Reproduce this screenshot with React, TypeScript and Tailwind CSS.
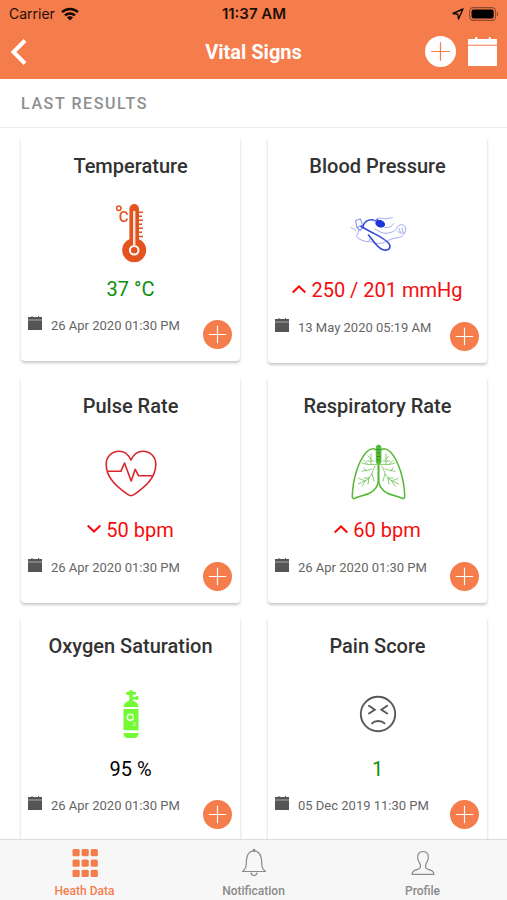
import type { ReactNode } from "react";

type Trend = "up" | "down";

type Vital = {
  title: string;
  value: string;
  color: string;
  trend?: Trend;
  date: string;
  icon: ReactNode;
};

function ThermometerIcon() {
  return (
    <svg viewBox="0 0 60 60" className="size-15" aria-hidden="true">
      <g fill="#e2531f">
        <rect x="28.4" y="1" width="9.6" height="42" rx="4.8" />
        <circle cx="33.2" cy="47.2" r="12" />
      </g>
      <path d="M33.2 8v34" stroke="#fbe3da" strokeWidth="2.4" />
      <circle cx="33.2" cy="47.3" r="4.3" fill="none" stroke="#fff" strokeWidth="2" />
      <path
        d="M37 9.3h5M37 13.3h4M37 17.3h5M37 21.3h4M37 25.3h5M37 29.3h4M37 33.5h5"
        stroke="#e2531f"
        strokeWidth="1.4"
      />
      <circle cx="17.8" cy="5.3" r="2.2" fill="none" stroke="#e2531f" strokeWidth="1.5" />
      <text x="17.8" y="18.8" fontSize="15" fontFamily="Roboto, sans-serif" fontWeight="500" fill="#e2531f">
        C
      </text>
    </svg>
  );
}

function BloodPressureIcon() {
  return (
    <svg viewBox="0 0 60 60" className="size-15" fill="none" strokeLinecap="round" aria-hidden="true">
      <g stroke="#a3aaf2" strokeWidth="1">
        <path d="M3 24.5c2 .8 3.600 2 5 3.200" />
        <path d="M11 27l-2.500 6.500c3 3.500 7.500 5 12 5.200l2-4" />
        <path d="M21.500 38c5 2.500 9 3 13 2s8-4.500 13-5c4-.4 7-1.500 8.500-4s2.500-5.500 1-7.500-4.500-2.300-6.500-.8-1.500 3.500-4 5-6 2.800-9.500 2.600-6.500-2.300-10-4.300" />
        <path d="M51 25.500l1.500 4M54 25l1 4M49.500 28c1.500 2 4 3 6.500 1.500" />
        <path d="M29 15.500c4-1.500 7 1 10 .2s4-.9 5.500-1M37 24.500c3-.3 4 .3 6-1.200s2-2.300 3-3" />
      </g>
      <g stroke="#8d97ee" strokeWidth="1.100">
        <path d="M7.500 17.500l5-1.500 2 6-5.500 2.500z" />
        <path d="M9 24.500l3 3 3.500-3.500" />
      </g>
      <path
        d="M15 23.500c1-4.500 5-7.500 10.500-6.500M13 23.500c5 2.800 8.500 4.700 12.500 6.700C32 33.500 42 38.500 42 43.300c0 4.200-5.500 5-9.500 2.200C27.500 42 24.500 36.500 20.500 32"
        stroke="#3349d8"
        strokeWidth="1.600"
      />
      <ellipse cx="32.200" cy="20.700" rx="5" ry="3.700" transform="rotate(20 32.200 20.700)" fill="#1d35d8" />
      <path d="M26.500 18l3-1.500" stroke="#3a4fd6" strokeWidth="1.200" />
    </svg>
  );
}

function HeartIcon() {
  return (
    <svg
      viewBox="0 0 60 60"
      className="size-15"
      fill="none"
      stroke="#d8262b"
      strokeWidth="1.6"
      strokeLinejoin="round"
      aria-hidden="true"
    >
      <path d="M30 17C27.500 11.500 23.500 8.200 18 8.200C10.500 8.200 5.200 14 5.200 21.500C5.200 35 16 44 27 51.600Q30 53.600 33 51.600C44 44 54.800 35 54.800 21.500C54.800 14 49.500 8.200 42 8.200C36.500 8.200 32.500 11.500 30 17Z" />
      <path d="M7 28.300H19.800L23.500 20L30.200 38L34.200 26.300L37.500 32.700H52" />
    </svg>
  );
}

function LungHalf() {
  return (
    <>
      <path
        d="M29 7.500C26 4.800 22 5.500 18.500 9C10 18 4.500 38 4.300 53.500Q4.300 56.300 7 55.300C12 53 17 52.500 22 50C27.500 47 30 43 30.200 38V21"
        strokeWidth="1.500"
      />
      <path
        d="M29 21.500C25 21 20 22.500 14 20M23 21V11M23 16l-3-3M20 21.500l-4-4M19 18h7M27 23c-2.500 5-3 9-6 12s-7 4-10.500 6M24 26c-4 2-8 1-10 2.500M18 28l-2-3M21 35l-1 6M16 37.500l-5-2M18 37l-4 6M24 31l2 7M21 35h-5"
        strokeWidth="0.700"
      />
    </>
  );
}

function LungsIcon() {
  return (
    <svg
      viewBox="0 0 60 60"
      className="size-15"
      fill="none"
      stroke="#55b836"
      strokeLinecap="round"
      aria-hidden="true"
    >
      <LungHalf />
      <g transform="translate(61 0) scale(-1 1)">
        <LungHalf />
      </g>
      <rect x="28.300" y="2.300" width="4.600" height="18.500" rx="2" fill="#55b836" />
      <path d="M29 6.500h3M29 10h3M29 13.500h3M29 17h3" stroke="#2c8f14" strokeWidth="0.900" />
    </svg>
  );
}

function OxygenIcon() {
  return (
    <svg viewBox="0 0 60 60" className="size-15" fill="#72fb33" aria-hidden="true">
      <path d="M28.300 7.300h3.400v1.400l3.300.6v2l-3.300 1v1.700h2.600l1.200-.9h1.800v4h-1.800l-1.200-.9h-2.300v2.300h-3.700v-6.200L25 11.300v-2l3.300-.6z" />
      <path d="M22.500 24c.4-3.700 3-6.300 7.500-6.300s7.100 2.600 7.500 6.300z" />
      <path d="M22.500 26h15v21.300h-15zM22.500 50h15c-.2 3.500-1.500 5-4 5h-7c-2.500 0-3.800-1.500-4-5z" />
      <circle cx="29.300" cy="34.300" r="3.100" fill="none" stroke="#e9ffdf" strokeWidth="1.600" />
      <text x="31.500" y="43" fontSize="6" fontFamily="Roboto, sans-serif" fontWeight="700" fill="#d4ffbf">
        2
      </text>
    </svg>
  );
}

function PainIcon() {
  return (
    <svg
      viewBox="0 0 60 60"
      className="size-15"
      fill="none"
      stroke="#58585a"
      strokeWidth="1.900"
      strokeLinecap="round"
      aria-hidden="true"
    >
      <circle cx="30" cy="31" r="17.200" />
      <path d="M21 22.700l5.800 4-5.800 3.800M39.200 22.700l-5.800 4 5.800 3.800M24 40.300c3-3 9.500-3 12.500 0" />
    </svg>
  );
}

function CalendarIcon({ className }: { className: string }) {
  return (
    <svg viewBox="0 0 28 28" className={className} fill="currentColor" aria-hidden="true">
      <path d="M0 2h7V0h2v2h11V0h2v2h6v5.500H0zM0 8.500h28V28H0z" />
    </svg>
  );
}

function PlusCircle({ className, line }: { className: string; line: string }) {
  return (
    <svg viewBox="0 0 30 30" className={className} aria-hidden="true">
      <circle cx="15" cy="15" r="15" fill="currentColor" />
      <path d="M15 6v18M6 15h18" stroke={line} strokeWidth="1.200" />
    </svg>
  );
}

function TrendIcon({ trend }: { trend: Trend }) {
  return (
    <svg
      viewBox="0 0 14 14"
      className="size-[14px]"
      fill="none"
      stroke="currentColor"
      strokeWidth="2"
      aria-label={trend}
    >
      <path d={trend === "up" ? "M.7 9.500L7 3.500l6.300 6" : "M.7 2.500L7 8.500l6.300-6"} />
    </svg>
  );
}

const vitals: Vital[] = [
  {
    title: "Temperature",
    value: "37 °C",
    color: "text-[#0a8f0a]",
    date: "26 Apr 2020 01:30 PM",
    icon: <ThermometerIcon />,
  },
  {
    title: "Blood Pressure",
    value: "250 / 201 mmHg",
    color: "text-[#f50d0d]",
    trend: "up",
    date: "13 May 2020 05:19 AM",
    icon: <BloodPressureIcon />,
  },
  {
    title: "Pulse Rate",
    value: "50 bpm",
    color: "text-[#f50d0d]",
    trend: "down",
    date: "26 Apr 2020 01:30 PM",
    icon: <HeartIcon />,
  },
  {
    title: "Respiratory Rate",
    value: "60 bpm",
    color: "text-[#f50d0d]",
    trend: "up",
    date: "26 Apr 2020 01:30 PM",
    icon: <LungsIcon />,
  },
  {
    title: "Oxygen Saturation",
    value: "95 %",
    color: "text-black",
    date: "26 Apr 2020 01:30 PM",
    icon: <OxygenIcon />,
  },
  {
    title: "Pain Score",
    value: "1",
    color: "text-[#0a8f0a]",
    date: "05 Dec 2019 11:30 PM",
    icon: <PainIcon />,
  },
];

function VitalCard({ vital }: { vital: Vital }) {
  return (
    <article className="rounded-sm bg-white pt-4 pb-3 shadow-[0_2px_3px_rgba(0,0,0,0.22)]">
      <h3 className="text-center text-xl leading-7 font-medium text-[#333]">{vital.title}</h3>
      <div className="mt-[23px] flex justify-center">{vital.icon}</div>
      <p
        className={`mt-[13px] flex items-center justify-center gap-[5px] text-xl ${
          vital.trend ? "leading-7" : "leading-[26px]"
        } ${vital.color}`}
      >
        {vital.trend && <TrendIcon trend={vital.trend} />}
        {vital.value}
      </p>
      <div className="flex items-start justify-between pr-2 pl-[7px]">
        <div className="mt-[14px] flex text-[13px] leading-5 text-[#666]">
          <CalendarIcon className="mr-[9px] size-[14px] text-[#555]" />
          <time>{vital.date}</time>
        </div>
        <button type="button" aria-label={`Add ${vital.title}`} className="mt-[18px] text-[#f57c4b]">
          <PlusCircle className="size-[29px]" line="#fff" />
        </button>
      </div>
    </article>
  );
}

function StatusBar() {
  return (
    <div className="grid h-7 grid-cols-3 items-center pr-2 pl-[9px] font-[Inter,sans-serif] text-sm text-[#1f0f08]">
      <div className="flex items-center gap-[6px]">
        Carrier
        <svg viewBox="0 0 18 14" className="h-[14px] w-[18px]" aria-hidden="true">
          <g fill="none" stroke="#140a05" strokeWidth="2.500">
            <path d="M1 5.200c4.500-4.300 11.500-4.300 16 0" />
            <path d="M4 8.400c2.800-2.600 7.200-2.600 10 0" />
          </g>
          <path d="M9 13.500L5.900 10.300c1.700-1.500 4.500-1.500 6.200 0z" fill="#140a05" />
        </svg>
      </div>
      <div className="text-center text-[15px] font-semibold">11:37 AM</div>
      <div className="flex items-center justify-end gap-[5px]">
        <svg viewBox="0 0 12 12" className="size-3" fill="none" stroke="#140a05" strokeWidth="1.400" strokeLinejoin="round" aria-hidden="true">
          <path d="M11 1L1 5.500l4.800.8L6.500 11z" />
        </svg>
        <svg viewBox="0 0 30 14" className="h-[14px] w-[30px]" aria-hidden="true">
          <rect x=".6" y=".6" width="26" height="12.800" rx="3.800" fill="none" stroke="#8f4a2e" strokeWidth="1.100" />
          <rect x="2.500" y="2.500" width="22.200" height="9" rx="2" fill="#000" />
          <path d="M28 4.800c1.800.7 1.800 3.700 0 4.400z" fill="#8f4a2e" />
        </svg>
      </div>
    </div>
  );
}

export default function App() {
  return (
    <div className="flex h-screen flex-col bg-white font-[Roboto,sans-serif]">
      <header className="shrink-0 bg-[#f57c4b] text-white">
        <StatusBar />
        <div className="grid h-[51px] grid-cols-[1fr_auto_1fr] items-center px-[10px] pb-1">
          <button type="button" aria-label="Back" className="w-fit">
            <svg viewBox="0 0 18 26" className="h-[26px] w-[18px]" fill="none" stroke="currentColor" strokeWidth="4" aria-hidden="true">
              <path d="M15 1.500L3.500 13 15 24.500" />
            </svg>
          </button>
          <h1 className="text-xl font-bold">Vital Signs</h1>
          <div className="flex items-center justify-end gap-3">
            <button type="button" aria-label="Add result">
              <PlusCircle className="size-[31px]" line="#f57c4b" />
            </button>
            <button type="button" aria-label="Calendar">
              <CalendarIcon className="size-[29px]" />
            </button>
          </div>
        </div>
      </header>

      <h2 className="shrink-0 border-b border-[#ebebeb] px-[21px] pt-[13px] pb-[11px] text-base leading-6 font-medium tracking-widest text-[#8f8f8f]">
        LAST RESULTS
      </h2>

      <main className="min-h-0 flex-1 overflow-y-auto pt-2 pr-5 pb-4 pl-[21px] [scrollbar-width:none]">
        <div className="grid grid-cols-2 items-start gap-x-7 gap-y-[13px]">
          {vitals.map((vital) => (
            <VitalCard key={vital.title} vital={vital} />
          ))}
        </div>
      </main>

      {/* Tab bar */}
      <nav className="grid h-[61px] shrink-0 grid-cols-3 border-t border-[#dcdcdc] bg-[#f7f7f7] text-xs leading-4 font-medium text-[#8a8a8a]">
        <a href="#data" className="flex flex-col items-center gap-[5px] pt-2 text-[#f57c4b]">
          <svg viewBox="0 0 28 30" className="h-[30px] w-7" fill="currentColor" aria-hidden="true">
            {[1, 11.500, 21.700].map((y) =>
              [1.500, 10.600, 19.700].map((x) => (
                <rect key={`${x}-${y}`} x={x} y={y} width="7.200" height="7.300" rx="1.500" />
              )),
            )}
          </svg>
          Heath Data
        </a>
        <a href="#notification" className="flex flex-col items-center gap-[5px] pt-2">
          <svg viewBox="0 0 28 30" className="h-[30px] w-7" fill="none" stroke="currentColor" strokeWidth="1.200" strokeLinejoin="round" aria-hidden="true">
            <path d="M2.500 23.500c3-2 3.800-4.500 3.800-8.500C6.300 7.500 8.500 3 14 3s7.700 4.500 7.700 12c0 4 .8 6.500 3.800 8.500z" />
            <path d="M11 24.500c.3 4 5.700 4 6 0" />
            <circle cx="14" cy="2.300" r=".9" fill="currentColor" />
          </svg>
          Notification
        </a>
        <a href="#profile" className="flex flex-col items-center gap-[5px] pt-2">
          <svg viewBox="0 0 28 30" className="h-[30px] w-7" fill="none" stroke="currentColor" strokeWidth="1.200" strokeLinejoin="round" aria-hidden="true">
            <path d="M14 3.500c-4 0-5.700 2.700-5.300 6.500.3 3.500 1.800 4.500 2.500 6.500.8 2.500 0 4-2.200 4.800-3.500 1.200-5.600 1.500-6 5h22c-.4-3.500-2.500-3.800-6-5-2.200-.8-3-2.300-2.200-4.800.7-2 2.200-3 2.500-6.500.4-3.800-1.300-6.500-5.300-6.500z" />
          </svg>
          Profile
        </a>
      </nav>
    </div>
  );
}
